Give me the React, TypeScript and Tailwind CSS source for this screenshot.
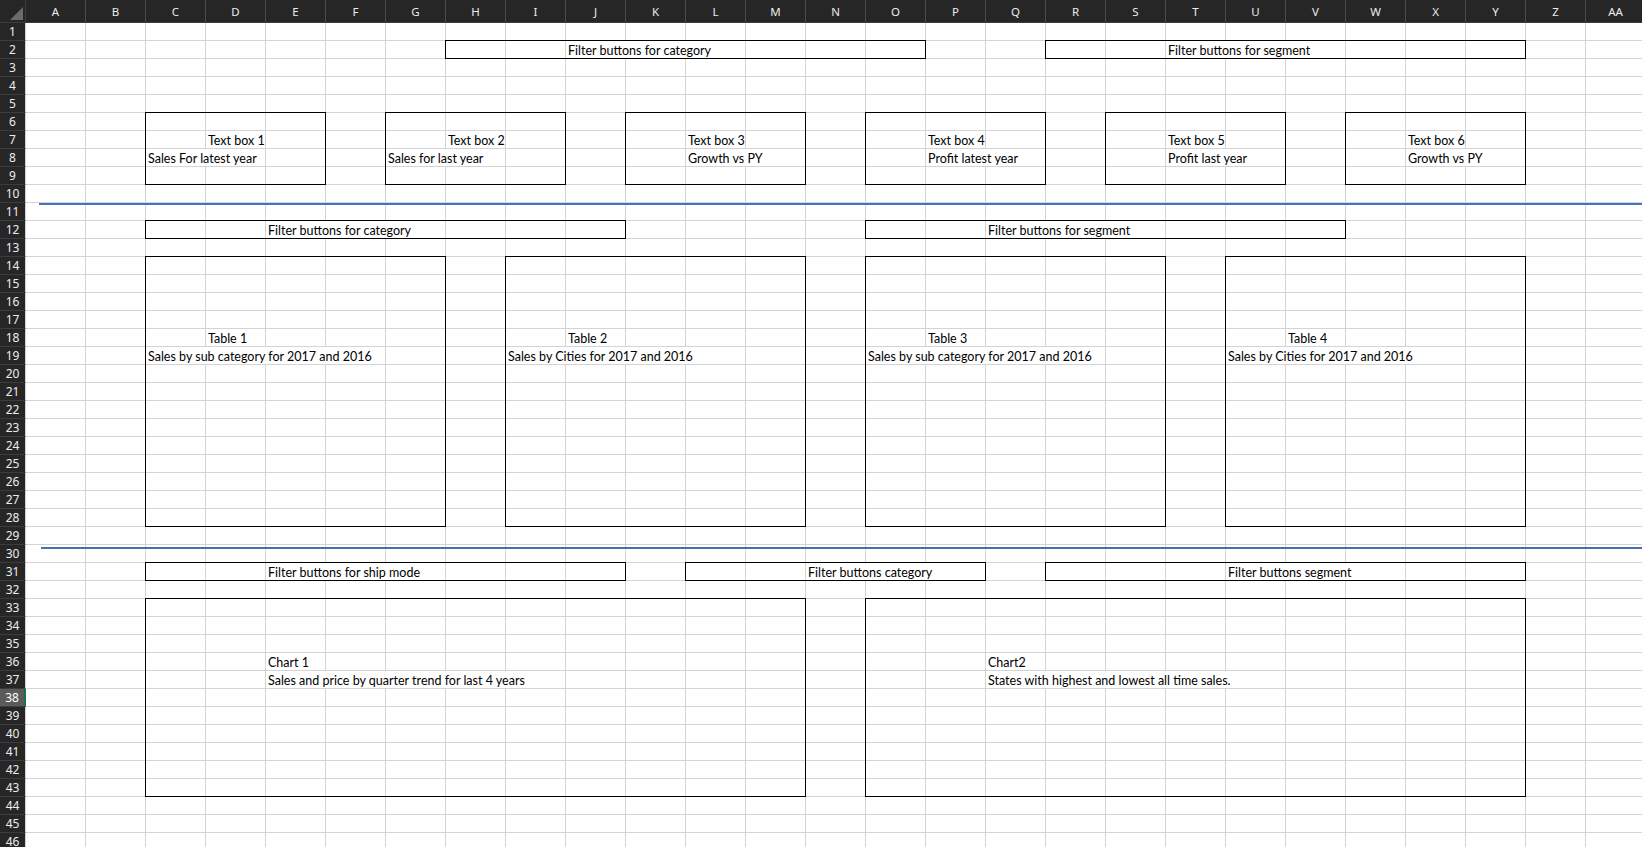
import React from "react";

const COLS = [
  "A", "B", "C", "D", "E", "F", "G", "H", "I", "J", "K", "L", "M", "N",
  "O", "P", "Q", "R", "S", "T", "U", "V", "W", "X", "Y", "Z", "AA",
];
const ROW_COUNT = 46;
const SELECTED_ROW = 38;

const GRID =
  "grid grid-cols-[26px_repeat(27,60px)] grid-rows-[23px_repeat(46,18px)]";

// bordered regions drawn over the cells (grid col = letter index + 1, grid row = row + 1)
const boxes: string[] = [
  // row 2 filters
  "col-start-[9] col-end-[17] row-start-[3] row-end-[4]",
  "col-start-[19] col-end-[27] row-start-[3] row-end-[4]",
  // text boxes, rows 6-9
  "col-start-[4] col-end-[7] row-start-[7] row-end-[11]",
  "col-start-[8] col-end-[11] row-start-[7] row-end-[11]",
  "col-start-[12] col-end-[15] row-start-[7] row-end-[11]",
  "col-start-[16] col-end-[19] row-start-[7] row-end-[11]",
  "col-start-[20] col-end-[23] row-start-[7] row-end-[11]",
  "col-start-[24] col-end-[27] row-start-[7] row-end-[11]",
  // row 12 filters
  "col-start-[4] col-end-[12] row-start-[13] row-end-[14]",
  "col-start-[16] col-end-[24] row-start-[13] row-end-[14]",
  // tables, rows 14-28
  "col-start-[4] col-end-[9] row-start-[15] row-end-[30]",
  "col-start-[10] col-end-[15] row-start-[15] row-end-[30]",
  "col-start-[16] col-end-[21] row-start-[15] row-end-[30]",
  "col-start-[22] col-end-[27] row-start-[15] row-end-[30]",
  // row 31 filters
  "col-start-[4] col-end-[12] row-start-[32] row-end-[33]",
  "col-start-[13] col-end-[18] row-start-[32] row-end-[33]",
  "col-start-[19] col-end-[27] row-start-[32] row-end-[33]",
  // charts, rows 33-43
  "col-start-[4] col-end-[15] row-start-[34] row-end-[45]",
  "col-start-[16] col-end-[27] row-start-[34] row-end-[45]",
];

// cell text, spanning the cells it spills into
const labels: { cls: string; text: string }[] = [
  { cls: "col-start-[11] col-end-[14] row-start-[3]", text: "Filter buttons for category" },
  { cls: "col-start-[21] col-end-[24] row-start-[3]", text: "Filter buttons for segment" },

  { cls: "col-start-[5] col-end-[6] row-start-[8]", text: "Text box 1" },
  { cls: "col-start-[9] col-end-[10] row-start-[8]", text: "Text box 2" },
  { cls: "col-start-[13] col-end-[14] row-start-[8]", text: "Text box 3" },
  { cls: "col-start-[17] col-end-[18] row-start-[8]", text: "Text box 4" },
  { cls: "col-start-[21] col-end-[22] row-start-[8]", text: "Text box 5" },
  { cls: "col-start-[25] col-end-[26] row-start-[8]", text: "Text box 6" },

  { cls: "col-start-[4] col-end-[6] row-start-[9]", text: "Sales For latest year" },
  { cls: "col-start-[8] col-end-[10] row-start-[9]", text: "Sales for last year" },
  { cls: "col-start-[13] col-end-[15] row-start-[9]", text: "Growth vs PY" },
  { cls: "col-start-[17] col-end-[19] row-start-[9]", text: "Profit latest year" },
  { cls: "col-start-[21] col-end-[23] row-start-[9]", text: "Profit last year" },
  { cls: "col-start-[25] col-end-[27] row-start-[9]", text: "Growth vs PY" },

  { cls: "col-start-[6] col-end-[9] row-start-[13]", text: "Filter buttons for category" },
  { cls: "col-start-[18] col-end-[21] row-start-[13]", text: "Filter buttons for segment" },

  { cls: "col-start-[5] col-end-[6] row-start-[19]", text: "Table 1" },
  { cls: "col-start-[11] col-end-[12] row-start-[19]", text: "Table 2" },
  { cls: "col-start-[17] col-end-[18] row-start-[19]", text: "Table 3" },
  { cls: "col-start-[23] col-end-[24] row-start-[19]", text: "Table 4" },

  { cls: "col-start-[4] col-end-[8] row-start-[20]", text: "Sales by sub category for 2017 and 2016" },
  { cls: "col-start-[10] col-end-[14] row-start-[20]", text: "Sales by Cities for 2017 and 2016" },
  { cls: "col-start-[16] col-end-[20] row-start-[20]", text: "Sales by sub category for 2017 and 2016" },
  { cls: "col-start-[22] col-end-[26] row-start-[20]", text: "Sales by Cities for 2017 and 2016" },

  { cls: "col-start-[6] col-end-[9] row-start-[32]", text: "Filter buttons for ship mode" },
  { cls: "col-start-[15] col-end-[18] row-start-[32]", text: "Filter buttons category" },
  { cls: "col-start-[22] col-end-[25] row-start-[32]", text: "Filter buttons segment" },

  { cls: "col-start-[6] col-end-[7] row-start-[37]", text: "Chart 1" },
  { cls: "col-start-[18] col-end-[19] row-start-[37]", text: "Chart2" },
  { cls: "col-start-[6] col-end-[11] row-start-[38]", text: "Sales and price by quarter trend for last 4 years" },
  { cls: "col-start-[18] col-end-[23] row-start-[38]", text: "States with highest and lowest all time sales." },
];

function Corner() {
  return (
    <div className="relative border-r border-b border-[#3c3c3c] bg-[#262626]">
      <svg className="absolute left-0 top-0" width="25" height="22" viewBox="0 0 25 22">
        <polygon points="23,7 23,20 10,20" fill="#6b6b6b" />
      </svg>
    </div>
  );
}

function CellsLayer() {
  const rows = Array.from({ length: ROW_COUNT }, (_, i) => i + 1);
  return (
    <div className={`${GRID} col-start-1 row-start-1`}>
      <Corner />
      {COLS.map((c) => (
        <div
          key={c}
          className="flex justify-center border-r border-b border-r-[#4a4a4a] border-b-[#3c3c3c] bg-[#262626] pt-[3px] text-[11.5px] leading-[18px] text-[#ececec]"
        >
          {c}
        </div>
      ))}
      {rows.map((r) => (
        <React.Fragment key={r}>
          {r === SELECTED_ROW ? (
            <div className="flex items-center justify-center border-b border-b-[#3c3c3c] border-r-2 border-r-[#1e7145] bg-[#5b5b5b] text-[12px] text-white">
              {r}
            </div>
          ) : (
            <div className="flex items-center justify-center border-r border-b border-r-[#d4d4d4] border-b-[#3c3c3c] bg-[#262626] text-[12px] text-[#ececec]">
              {r}
            </div>
          )}
          {COLS.map((c) => (
            <div key={c} className="border-r border-b border-[#d4d4d4]" />
          ))}
        </React.Fragment>
      ))}
    </div>
  );
}

function OverlayLayer() {
  return (
    <div className={`${GRID} col-start-1 row-start-1`}>
      {labels.map((l, i) => (
        <div
          key={i}
          className={`${l.cls} mr-px mb-px overflow-visible whitespace-nowrap bg-white pl-[2px] pt-px font-['Lato',sans-serif] text-[12.5px] leading-[17px] text-black`}
        >
          {l.text}
        </div>
      ))}
      {boxes.map((b, i) => (
        <div key={i} className={`${b} -ml-px -mt-px border border-black`} />
      ))}
      {/* section separators */}
      <div className="col-start-[2] col-end-[29] row-start-[12] ml-[13px] h-[2px] self-start bg-[#4472c4]" />
      <div className="col-start-[2] col-end-[29] row-start-[31] mt-[2px] ml-[15px] h-[2px] self-start bg-[#4a6db0]" />
    </div>
  );
}

export default function App() {
  return (
    <div className="h-[847px] w-[1642px] overflow-hidden bg-white font-['Noto_Sans',sans-serif]">
      <div className="grid">
        <CellsLayer />
        <OverlayLayer />
      </div>
    </div>
  );
}
